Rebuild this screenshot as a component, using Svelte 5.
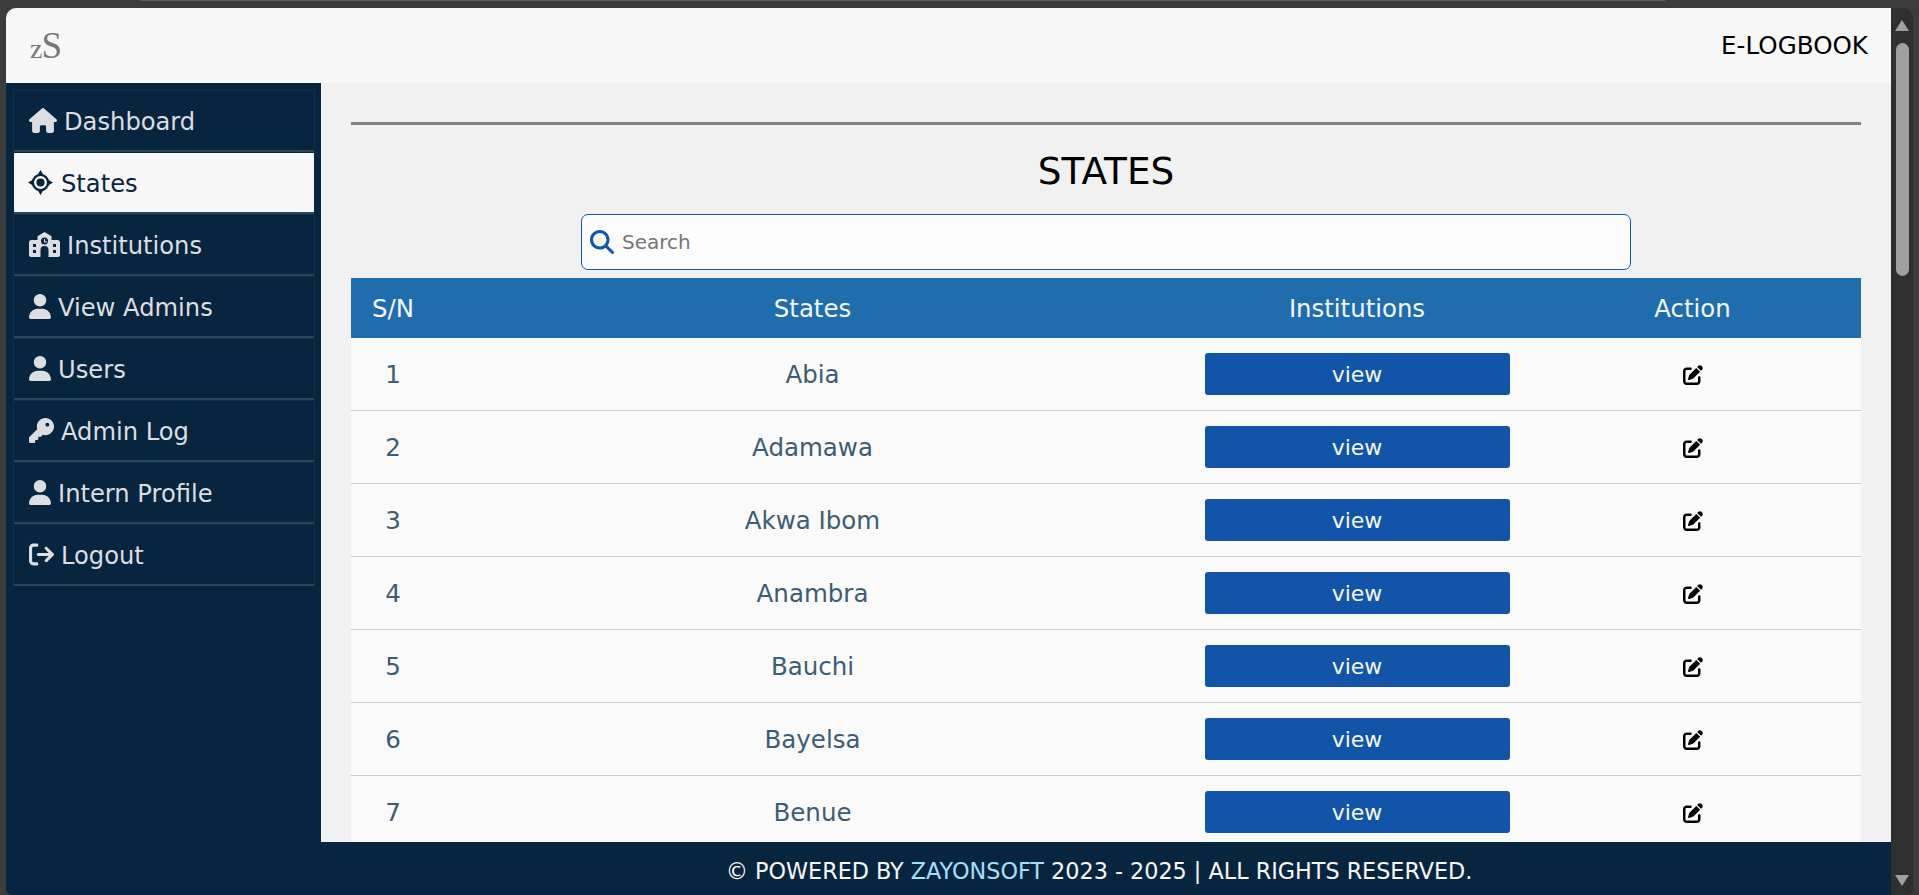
<script>
  const nav = [
    { label: 'Dashboard', icon: 'house' },
    { label: 'States', icon: 'target', active: true },
    { label: 'Institutions', icon: 'school' },
    { label: 'View Admins', icon: 'user' },
    { label: 'Users', icon: 'user' },
    { label: 'Admin Log', icon: 'key' },
    { label: 'Intern Profile', icon: 'user' },
    { label: 'Logout', icon: 'logout' }
  ];
  const states = ['Abia', 'Adamawa', 'Akwa Ibom', 'Anambra', 'Bauchi', 'Bayelsa', 'Benue'];
</script>

<div class="desktop">
  <div class="topstrip"></div>
  <div class="frame">
    <div class="window">
      <header class="header">
        <div class="logo"><span class="logo-z">z</span><span class="logo-s">S</span></div>
        <div class="brand">E-LOGBOOK</div>
      </header>

      <div class="body">
        <aside class="sidebar">
          {#each nav as item}
            <a class="nav-item" class:active={item.active} href="#top">
              {#if item.icon === 'house'}
                <svg class="nav-icon" width="28" height="25" viewBox="0 0 576 512"><path d="M575.8 255.5c0 18-15 32.1-32 32.1h-32l.7 160.2c0 2.7-.2 5.4-.5 8.1V472c0 22.1-17.9 40-40 40H456c-1.1 0-2.2 0-3.3-.1c-1.4 .1-2.8 .1-4.2 .1H416 392c-22.1 0-40-17.9-40-40V448 384c0-17.7-14.3-32-32-32H256c-17.7 0-32 14.3-32 32v64 24c0 22.1-17.9 40-40 40H160 128.1c-1.5 0-3-.1-4.5-.2c-1.2 .1-2.4 .2-3.6 .2H104c-22.1 0-40-17.9-40-40V360c0-.9 0-1.9 .1-2.8V287.6H32c-18 0-32-14-32-32.1c0-9 3-17 10-24L266.4 8c7-7 15-8 22-8s15 2 21 7L564.8 231.5c8 7 12 15 11 24z"/></svg>
              {:else if item.icon === 'target'}
                <svg class="nav-icon" width="25" height="25" viewBox="0 0 24 24"><path d="M12 0l3 5h-6zM12 24l-3-5h6zM0 12l5-3v6zM24 12l-5 3v-6z"/><circle cx="12" cy="12" r="7.300" fill="none" stroke="currentColor" stroke-width="2.200"/><circle cx="12" cy="12" r="3.900"/></svg>
              {:else if item.icon === 'school'}
                <svg class="nav-icon" width="31" height="25" viewBox="0 0 31 25"><path fill-rule="evenodd" d="M15.500 0l7 4.200V8h6c1.400 0 2.500 1.100 2.500 2.500V23c0 1.100-.9 2-2 2H19.500v-7a4 4 0 0 0-8 0v7H2c-1.100 0-2-.9-2-2V10.500C0 9.100 1.100 8 2.500 8h6V4.200zM15.500 5.500a3.500 3.500 0 1 0 0 7 3.500 3.500 0 0 0 0-7zM4 12v3h3v-3zM4 18v3h3v-3zM24 12v3h3v-3zM24 18v3h3v-3z"/><path d="M15 7h1v2.500h2v1h-3z"/></svg>
              {:else if item.icon === 'user'}
                <svg class="nav-icon" width="22" height="25" viewBox="0 0 448 512"><path d="M224 256A128 128 0 1 0 224 0a128 128 0 1 0 0 256zm-45.700 48C79.800 304 0 383.800 0 482.300C0 498.700 13.300 512 29.700 512H418.300c16.400 0 29.700-13.300 29.700-29.700C448 383.800 368.200 304 269.700 304H178.300z"/></svg>
              {:else if item.icon === 'key'}
                <svg class="nav-icon" width="25" height="25" viewBox="0 0 512 512"><path d="M336 352c97.200 0 176-78.800 176-176S433.200 0 336 0S160 78.800 160 176c0 18.700 2.900 36.800 8.300 53.700L7 391c-4.500 4.500-7 10.600-7 17v80c0 13.300 10.700 24 24 24h80c13.300 0 24-10.700 24-24V448h40c13.300 0 24-10.700 24-24V384h40c6.400 0 12.500-2.500 17-7l33.300-33.300c16.900 5.400 35 8.300 53.700 8.300zM376 96a40 40 0 1 1 0 80 40 40 0 1 1 0-80z"/></svg>
              {:else}
                <svg class="nav-icon" width="25" height="25" viewBox="0 0 512 512"><path d="M502.600 278.600c12.500-12.500 12.500-32.800 0-45.300l-128-128c-12.500-12.500-32.800-12.500-45.300 0s-12.500 32.800 0 45.300L402.700 224 192 224c-17.700 0-32 14.300-32 32s14.300 32 32 32l210.700 0-73.400 73.400c-12.500 12.500-12.500 32.800 0 45.300s32.800 12.500 45.300 0l128-128zM160 96c17.700 0 32-14.300 32-32s-14.300-32-32-32L96 32C43 32 0 75 0 128L0 384c0 53 43 96 96 96l64 0c17.700 0 32-14.300 32-32s-14.300-32-32-32l-64 0c-17.700 0-32-14.300-32-32l0-256c0-17.700 14.300-32 32-32l64 0z"/></svg>
              {/if}
              <span>{item.label}</span>
            </a>
          {/each}
        </aside>

        <main class="main">
          <hr class="rule" />
          <h1 class="title">STATES</h1>
          <div class="search">
            <svg class="search-icon" width="24" height="24" viewBox="0 0 512 512"><path d="M416 208c0 45.900-14.900 88.300-40 122.700L502.600 457.400c12.500 12.500 12.500 32.800 0 45.300s-32.800 12.500-45.300 0L330.700 376c-34.400 25.200-76.800 40-122.700 40C93.100 416 0 322.900 0 208S93.100 0 208 0S416 93.100 416 208zM208 352a144 144 0 1 0 0-288 144 144 0 1 0 0 288z"/></svg>
            <input class="search-input" type="text" placeholder="Search" />
          </div>

          <table class="table">
            <colgroup>
              <col style="width: 84px" />
              <col style="width: 755px" />
              <col style="width: 334px" />
              <col />
            </colgroup>
            <thead>
              <tr>
                <th>S/N</th>
                <th>States</th>
                <th>Institutions</th>
                <th>Action</th>
              </tr>
            </thead>
            <tbody>
              {#each states as name, i}
                <tr>
                  <td>{i + 1}</td>
                  <td>{name}</td>
                  <td><button class="view-btn">view</button></td>
                  <td>
                    <svg class="edit-icon" width="20" height="20" viewBox="0 0 512 512"><path d="M471.600 21.700c-21.900-21.900-57.300-21.900-79.200 0L362.300 51.700l97.900 97.900 30.100-30.100c21.900-21.900 21.900-57.300 0-79.200L471.600 21.700zm-299.200 220c-6.100 6.100-10.800 13.600-13.500 21.900l-29.600 88.800c-2.900 8.600-.6 18.100 5.800 24.600s15.900 8.700 24.600 5.800l88.800-29.600c8.200-2.700 15.700-7.400 21.900-13.500L437.700 172.300 339.700 74.300 172.400 241.700zM96 64C43 64 0 107 0 160V416c0 53 43 96 96 96H352c53 0 96-43 96-96V320c0-17.700-14.300-32-32-32s-32 14.300-32 32v96c0 17.700-14.300 32-32 32H96c-17.700 0-32-14.300-32-32V160c0-17.700 14.300-32 32-32h96c17.700 0 32-14.300 32-32s-14.300-32-32-32H96z"/></svg>
                  </td>
                </tr>
              {/each}
            </tbody>
          </table>
        </main>
      </div>

      <footer class="footer">
        <span>© POWERED BY <span class="company">ZAYONSOFT</span> 2023 - 2025 | ALL RIGHTS RESERVED.</span>
      </footer>
    </div>

    <div class="scrollbar">
      <div class="arrow up"></div>
      <div class="track"><div class="thumb"></div></div>
      <div class="arrow down"></div>
    </div>
  </div>
</div>

<style>
  :global(body) {
    margin: 0;
    background: #3b3b3b;
    overflow: hidden;
  }
  .desktop {
    height: 895px;
    display: flex;
    flex-direction: column;
    font-family: "DejaVu Sans", Verdana, sans-serif;
  }
  .topstrip {
    height: 1px;
    margin: 0 254px 7px 140px;
    background: #55616d;
  }
  .frame {
    flex: 1;
    min-height: 0;
    display: flex;
    margin-left: 6px;
    margin-right: 6px;
  }
  .window {
    flex: 1;
    min-width: 0;
    display: flex;
    flex-direction: column;
    border-radius: 10px 0 0 6px;
    overflow: hidden;
  }
  .header {
    height: 75px;
    flex: none;
    display: flex;
    align-items: center;
    justify-content: space-between;
    padding: 0 23px 0 24px;
    background: #f7f7f7;
  }
  .logo {
    font-family: "Liberation Serif", serif;
    color: #777;
    line-height: 1;
  }
  .logo-z { font-size: 28px; }
  .logo-s { font-size: 37px; margin-left: -1px; letter-spacing: -2px; }
  .brand {
    font-size: 24.6px;
    color: #000;
  }
  .body {
    flex: 1;
    min-height: 0;
    display: flex;
  }
  .sidebar {
    width: 315px;
    flex: none;
    box-sizing: border-box;
    padding: 7px 6px 0 7px;
    background: #082540;
    display: flex;
    flex-direction: column;
  }
  .nav-item {
    height: 62px;
    flex: none;
    box-sizing: border-box;
    display: flex;
    align-items: center;
    gap: 7px;
    padding: 2px 0 0 15px;
    border: 1px dotted #1f3c56;
    border-bottom: 2px solid #2c4559;
    border-radius: 2px;
    color: #dcdee2;
    font-size: 24.2px;
    text-decoration: none;
  }
  .nav-item.active {
    background: #f7f7f7;
    color: #0a2540;
    margin: 0 1px;
    padding-left: 14px;
    gap: 8px;
    border-color: #082540;
    border-width: 1px 0 2px;
    border-style: solid;
    border-bottom-color: #2c4559;
    border-radius: 0;
  }
  .nav-icon {
    fill: currentColor;
    flex: none;
    margin-top: -2px;
  }
  .main {
    flex: 1;
    min-width: 0;
    overflow: hidden;
    box-sizing: border-box;
    padding: 39px 30px 0;
    background: #f1f1f1;
    display: flex;
    flex-direction: column;
    align-items: center;
  }
  .rule {
    align-self: stretch;
    flex: none;
    height: 3px;
    margin: 0;
    border: 0;
    background: #848484;
  }
  .title {
    flex: none;
    margin: 24px 0 0;
    height: 65px;
    font-size: 37.4px;
    font-weight: 400;
    line-height: 44px;
    color: #000;
  }
  .search {
    width: 1050px;
    height: 56px;
    box-sizing: border-box;
    flex: none;
    display: flex;
    align-items: center;
    gap: 6px;
    padding-left: 8px;
    background: #fcfcfc;
    border: 1px solid #1254a8;
    border-radius: 7px;
  }
  .search-icon {
    fill: #1254a8;
    flex: none;
  }
  .search-input {
    flex: 1;
    border: 0;
    outline: 0;
    background: transparent;
    font: 20px "DejaVu Sans", Verdana, sans-serif;
    color: #333;
  }
  .search-input::placeholder {
    color: #757575;
    opacity: 1;
  }
  .table {
    width: 100%;
    flex: none;
    margin-top: 8px;
    border-collapse: collapse;
    table-layout: fixed;
    background: #fafafa;
  }
  th {
    height: 60px;
    padding: 0;
    background: #1f6dac;
    color: #f4f7fa;
    font-size: 24.4px;
    font-weight: 400;
    text-align: center;
  }
  td {
    height: 72px;
    padding: 0;
    border-bottom: 1px solid #cccccc;
    color: #3d5c74;
    font-size: 24.5px;
    text-align: center;
  }
  .view-btn {
    display: block;
    width: 305px;
    height: 42px;
    margin: 0 auto;
    padding: 0;
    border: 0;
    border-radius: 3px;
    background: #1254a8;
    color: #f4f7fa;
    font: 22px "DejaVu Sans", Verdana, sans-serif;
  }
  .edit-icon {
    display: block;
    margin: 1px auto 0;
    fill: #000;
  }
  .footer {
    height: 53px;
    flex: none;
    box-sizing: border-box;
    display: flex;
    align-items: center;
    justify-content: center;
    padding: 4px 0 0 301px;
    background: #082540;
    color: #f7f7f7;
    font-size: 22.3px;
  }
  .company {
    color: #a5e0fb;
  }
  .scrollbar {
    width: 22px;
    flex: none;
    display: flex;
    flex-direction: column;
    align-items: center;
    background: #2f2f2f;
    border-radius: 0 10px 6px 0;
  }
  .arrow {
    width: 0;
    height: 0;
    flex: none;
    border-left: 7px solid transparent;
    border-right: 7px solid transparent;
  }
  .arrow.up {
    margin-top: 12px;
    border-bottom: 11px solid #a0a0a0;
  }
  .arrow.down {
    margin-bottom: 9px;
    border-top: 11px solid #a0a0a0;
  }
  .track {
    flex: 1;
    width: 13px;
    padding-top: 12px;
  }
  .thumb {
    height: 233px;
    border-radius: 7px;
    background: #a0a0a0;
  }
</style>
